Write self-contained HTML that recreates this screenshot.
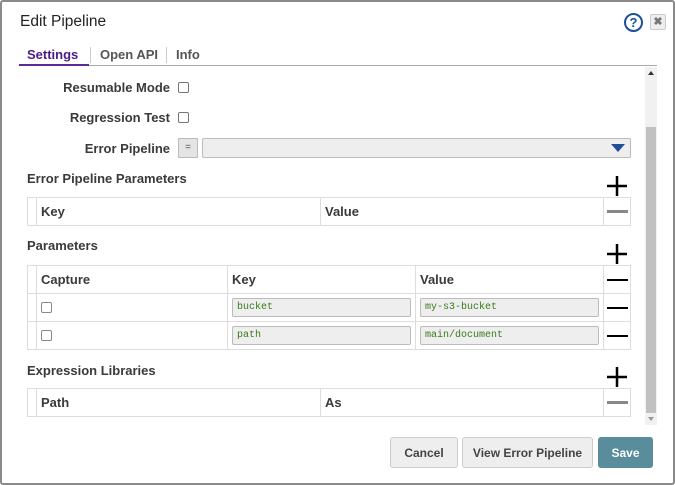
<!DOCTYPE html>
<html><head><style>
*{box-sizing:border-box;margin:0;padding:0}
body{width:675px;height:485px;background:#fff;font-family:"Liberation Sans",sans-serif;color:#333;position:relative;overflow:hidden}
.a{position:absolute}
.frame{left:0;top:0;width:675px;height:485px;border:2px solid #8a8a8a;border-radius:3px}
.lbl{font-size:13px;font-weight:bold;color:#3a3a3a;text-align:right;width:150px;left:20px}
.cb{width:11px;height:11px;border:1px solid #777;border-radius:2px;background:#fff}
.sec{left:27px;font-size:13px;font-weight:bold;color:#3a3a3a}
table{position:absolute;border-collapse:collapse;font-size:13px;font-weight:bold;color:#3a3a3a}
td{border:1px solid #ddd;height:28px;padding:0 4px;vertical-align:middle}
.plus{width:22px;height:20px}
.inp{height:19px;border:1px solid #bbb;border-radius:2px;background:#eee;font-family:"Liberation Mono",monospace;font-size:10px;color:#3a7a1a;padding:0 4px;line-height:17px;font-weight:normal}
.mn{display:block;margin:auto;width:21px;height:2px;background:#000}
.mg{display:block;margin:auto;width:21px;height:3px;background:#888}
.btn{top:437px;height:31px;border:1px solid #ccc;border-radius:3px;background:#eee;font-size:12px;font-weight:bold;color:#444;text-align:center;line-height:31px}
</style></head><body>
<div class="a frame"></div>
<div class="a" style="left:20px;top:13px;font-size:15.5px;color:#222">Edit Pipeline</div>
<div class="a" style="left:624px;top:13px;width:19px;height:19px;border:2px solid #1f4f96;border-radius:50%;color:#1f4f96;font-size:13px;font-weight:bold;text-align:center;line-height:15px">?</div>
<div class="a" style="left:650px;top:14px;width:16px;height:16px;border:1px solid #ccc;background:#eee;border-radius:2px;color:#777;font-size:11px;text-align:center;line-height:14px;font-weight:bold">✖</div>
<div class="a" style="left:27px;top:47px;font-size:13px;font-weight:bold;color:#4b1a8a">Settings</div>
<div class="a" style="left:90px;top:47px;width:1px;height:16px;background:#ccc"></div>
<div class="a" style="left:100px;top:47px;font-size:13px;font-weight:bold;color:#555">Open API</div>
<div class="a" style="left:166px;top:47px;width:1px;height:16px;background:#ccc"></div>
<div class="a" style="left:176px;top:47px;font-size:13px;font-weight:bold;color:#555">Info</div>
<div class="a" style="left:19px;top:65px;width:638px;height:1px;background:#aaa"></div>
<div class="a" style="left:19px;top:64px;width:70px;height:2px;background:#5a2a9a"></div>
<div class="a" style="left:645px;top:67px;width:12px;height:358px;background:#f1f1f1"></div>
<div class="a" style="left:646px;top:127px;width:10px;height:286px;background:#c1c1c1"></div>
<div class="a" style="left:648px;top:71px;width:0;height:0;border:3px solid transparent;border-bottom:4px solid #333;border-top:0"></div>
<div class="a" style="left:648px;top:417px;width:0;height:0;border:3px solid transparent;border-top:4px solid #999;border-bottom:0"></div>

<div class="a lbl" style="top:80px">Resumable Mode</div>
<div class="a cb" style="left:178px;top:82px"></div>
<div class="a lbl" style="top:110px">Regression Test</div>
<div class="a cb" style="left:178px;top:112px"></div>
<div class="a lbl" style="top:141px">Error Pipeline</div>
<div class="a" style="left:178px;top:138px;width:20px;height:20px;border:1px solid #bbb;background:#e4e4e4;font-size:10px;text-align:center;line-height:18px;color:#555">=</div>
<div class="a" style="left:202px;top:138px;width:429px;height:20px;border:1px solid #bbb;background:#eee;border-radius:2px"></div>
<div class="a" style="left:611px;top:144px;width:0;height:0;border-left:7px solid transparent;border-right:7px solid transparent;border-top:8px solid #1f4f96"></div>

<div class="a sec" style="top:171px">Error Pipeline Parameters</div>
<svg class="a plus" style="left:606px;top:176px" viewBox="0 0 22 20"><path d="M1 10H21M11 0V20" stroke="#000" stroke-width="2.5"/></svg>
<table style="left:27px;top:197px;width:604px"><tr><td style="width:9px"></td><td style="width:284px">Key</td><td style="width:283px">Value</td><td style="width:27px;padding:0"><span class="mg"></span></td></tr></table>

<div class="a sec" style="top:238px">Parameters</div>
<svg class="a plus" style="left:606px;top:244px" viewBox="0 0 22 20"><path d="M1 10H21M11 0V20" stroke="#000" stroke-width="2.5"/></svg>
<table style="left:27px;top:265px;width:604px">
<tr><td style="width:9px"></td><td style="width:191px">Capture</td><td style="width:188px">Key</td><td style="width:188px">Value</td><td style="width:27px;padding:0"><span class="mn"></span></td></tr>
<tr><td></td><td><div class="cb" style="border-color:#888"></div></td><td><div class="inp">bucket</div></td><td><div class="inp">my-s3-bucket</div></td><td style="padding:0"><span class="mn"></span></td></tr>
<tr><td></td><td><div class="cb" style="border-color:#888"></div></td><td><div class="inp">path</div></td><td><div class="inp">main/document</div></td><td style="padding:0"><span class="mn"></span></td></tr>
</table>

<div class="a sec" style="top:363px">Expression Libraries</div>
<svg class="a plus" style="left:606px;top:367px" viewBox="0 0 22 20"><path d="M1 10H21M11 0V20" stroke="#000" stroke-width="2.5"/></svg>
<table style="left:27px;top:388px;width:604px"><tr><td style="width:9px"></td><td style="width:284px">Path</td><td style="width:283px">As</td><td style="width:27px;padding:0"><span class="mg"></span></td></tr></table>

<div class="a btn" style="left:390px;width:68px">Cancel</div>
<div class="a btn" style="left:462px;width:131px">View Error Pipeline</div>
<div class="a btn" style="left:598px;width:55px;background:#5a8d9c;border-color:#5a8d9c;color:#fff">Save</div>
</body></html>
